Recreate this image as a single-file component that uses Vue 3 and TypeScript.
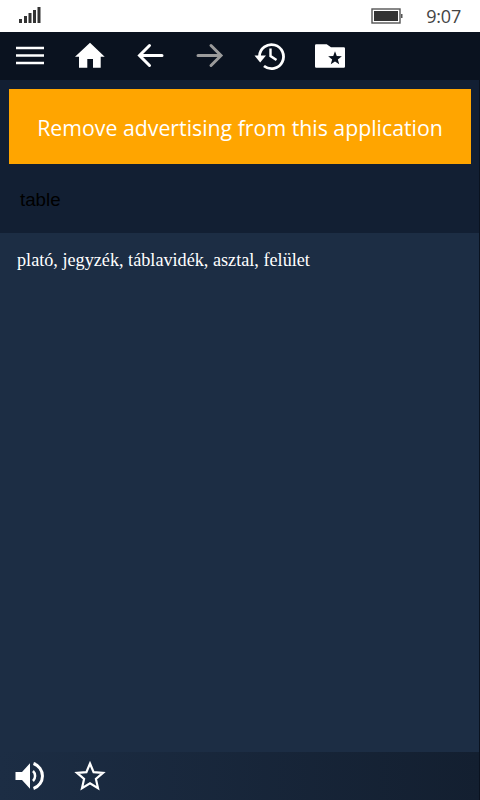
<script setup lang="ts">
const translation = 'plató, jegyzék, táblavidék, asztal, felület'
</script>

<template>
  <div class="phone">
    <div class="status">
      <svg class="signal" width="24" height="18" viewBox="0 0 24 18">
        <rect x="0" y="13" width="3" height="4" />
        <rect x="5" y="10" width="3" height="7" />
        <rect x="9.500" y="7" width="3" height="10" />
        <rect x="14" y="4" width="3" height="13" />
        <rect x="18.500" y="1" width="3" height="16" />
      </svg>
      <div class="status-right">
        <svg class="battery" width="32" height="16" viewBox="0 0 32 16">
          <rect x="1" y="1" width="28" height="14" fill="none" stroke="#555" stroke-width="1.4" />
          <rect x="3" y="3" width="24" height="10" fill="#333" />
          <rect x="30" y="6" width="1.5" height="4" fill="#555" />
        </svg>
        <span class="time">9:07</span>
      </div>
    </div>

    <div class="toolbar">
      <svg class="icon" viewBox="0 0 32 32" width="32" height="32">
        <path d="M2 8h28M2 15.500h28M2 23h28" stroke="#fff" stroke-width="2.600" fill="none" />
      </svg>
      <svg class="icon" viewBox="0 0 32 32" width="32" height="32">
        <path fill="#fff" d="M16 2.700 L30.700 16.700 L26.700 16.700 L26.700 27.700 L19 27.700 L19 19 L13.300 19 L13.300 27.700 L5 27.700 L5 16.700 L1 16.700 Z" />
      </svg>
      <svg class="icon" viewBox="0 0 32 32" width="32" height="32">
        <path d="M28 15.500H6.500M15.500 5.500l-10 10 10 10" stroke="#fff" stroke-width="3" stroke-linecap="round" fill="none" />
      </svg>
      <svg class="icon" viewBox="0 0 32 32" width="32" height="32">
        <path d="M4 15.500h22M17 5.500l10 10-10 10" stroke="#9b9b9b" stroke-width="3" stroke-linecap="round" fill="none" />
      </svg>
      <svg class="icon" viewBox="0 0 32 32" width="32" height="32">
        <path d="M5.500 16A12 12 0 1 1 10 26" stroke="#fff" stroke-width="2.800" fill="none" />
        <path fill="#fff" d="M0.500 15.500h11.500L6.200 22.500z" />
        <path d="M16.500 8.500V16l6 4" stroke="#fff" stroke-width="2.400" fill="none" />
      </svg>
      <svg class="icon" viewBox="0 0 32 32" width="32" height="32">
        <path fill="#fff" d="M1 5.500A1.200 1.200 0 0 1 2.200 4.300H12.700L17 7.300h12.800A1.200 1.200 0 0 1 31 8.500v18a1.200 1.200 0 0 1-1.200 1.200H2.200A1.200 1.200 0 0 1 1 26.500z" />
        <path fill="#0a121f" d="M21 11.300 22.760 16.070 27.850 16.280 23.850 19.430 25.230 24.330 21 21.500 16.770 24.330 18.150 19.430 14.150 16.280 19.240 16.070z" />
      </svg>
    </div>

    <div class="header">
      <div class="banner">Remove advertising from this application</div>
      <div class="word">table</div>
    </div>

    <div class="content">{{ translation }}</div>

    <div class="bottom">
      <svg class="icon" viewBox="0 0 32 32" width="32" height="32">
        <path fill="#fff" d="M1.500 12h6.500l8-8.700v25.400l-8-8.700H1.500z" />
        <path d="M19 11a7 7 0 0 1 0 10" stroke="#fff" stroke-width="2.500" fill="none" />
        <path d="M19.500 3.500A13.200 13.200 0 0 1 19.500 28.500" stroke="#fff" stroke-width="3" fill="none" />
      </svg>
      <svg class="icon" viewBox="0 0 32 32" width="32" height="32">
        <path d="M16 3.500l3.600 8.600 9.400.8-7.100 6.100 2.100 9.100-8-4.800-8 4.800 2.100-9.100L3 12.900l9.400-.8z" stroke="#fff" stroke-width="2.200" fill="none" />
      </svg>
    </div>
  </div>
</template>

<style>
html,
body {
  margin: 0;
  background: #1c2d44;
}
</style>

<style scoped>
.phone {
  width: 480px;
  height: 800px;
  display: flex;
  flex-direction: column;
  overflow: hidden;
  background: #1c2d44;
}

.status {
  height: 32px;
  flex: none;
  background: #fff;
  display: flex;
  align-items: center;
  justify-content: space-between;
  padding: 0 19px;
  box-sizing: border-box;
}

.signal {
  fill: #333;
  margin-top: -2px;
}

.status-right {
  display: flex;
  align-items: center;
  gap: 23px;
}

.time {
  font-family: "Open Sans", sans-serif;
  font-size: 18px;
  letter-spacing: -0.2px;
  color: #444;
}

.toolbar {
  height: 48px;
  flex: none;
  background: #0a121f;
  display: flex;
  align-items: center;
  gap: 28px;
  padding: 0 14px;
}

.icon {
  flex: none;
  display: block;
}

.header {
  height: 153px;
  flex: none;
  background: #121f33;
  padding-top: 9px;
  box-sizing: border-box;
  border-right: 1px solid #0a121f;
}

.banner {
  margin: 0 8px 0 9px;
  height: 75px;
  padding-top: 2px;
  box-sizing: border-box;
  background: #ffa500;
  color: #fff;
  font-family: "Open Sans", sans-serif;
  font-size: 21.3px;
  display: flex;
  align-items: center;
  justify-content: center;
}

.word {
  font-family: "Liberation Sans", sans-serif;
  font-size: 18.7px;
  color: #000;
  padding: 25px 20px 0;
}

.content {
  flex: 1;
  padding: 17px 17px 0;
  font-family: "Liberation Serif", serif;
  font-size: 18.2px;
  line-height: 20px;
  color: #fff;
  border-right: 1px solid #0a121f;
}

.bottom {
  height: 48px;
  flex: none;
  background: linear-gradient(90deg, #1c2d44, #131f30);
  display: flex;
  align-items: center;
  gap: 28px;
  padding: 0 14px;
  border-right: 1px solid #0a121f;
}
</style>
